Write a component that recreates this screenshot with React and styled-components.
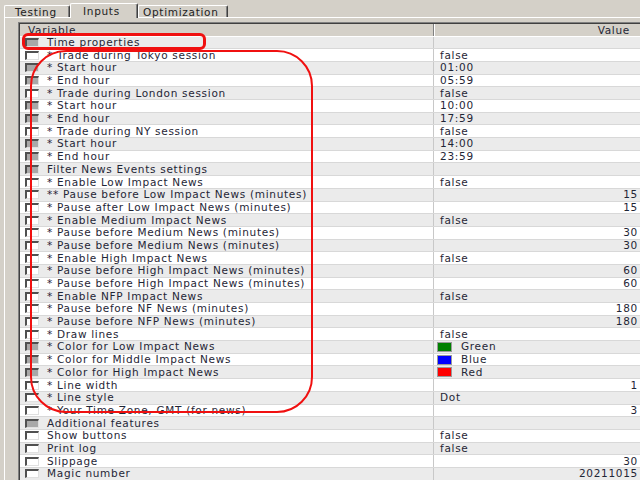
import React from "react";
import styled, { createGlobalStyle } from "styled-components";

const GlobalStyle = createGlobalStyle`
  html, body { margin: 0; padding: 0; background: #d4d0c8; }
  body { font-family: "DejaVu Sans", "Liberation Sans", sans-serif; }
  * { box-sizing: border-box; }
`;

const Window = styled.div`
  position: relative;
  width: 640px;
  height: 480px;
  overflow: hidden;
  background: #d4d0c8;
  font-size: 10.5px;
  letter-spacing: 0.7px;
  color: #1f2636;
`;

const TabBar = styled.div`
  display: flex;
  align-items: flex-end;
  height: 17px;
  padding-left: 4px;
`;

const Tab = styled.div`
  position: relative;
  width: ${(p) => p.$w}px;
  height: ${(p) => (p.$active ? "15px" : "12px")};
  padding-left: ${(p) => p.$pad}px;
  margin-bottom: ${(p) => (p.$active ? "-1px" : "0")};
  background: #d4d0c8;
  border-top: 1px solid #fff;
  border-left: 1px solid #fff;
  border-right: 1px solid #404040;
  border-top-left-radius: 2px;
  border-top-right-radius: 2px;
  display: flex;
  align-items: center;
  font-size: 10.5px;
  color: #222;
  z-index: ${(p) => (p.$active ? 2 : 1)};
  box-shadow: inset -1px 0 0 #808080;
`;

const Panel = styled.div`
  border-top: 1px solid #fff;
  border-left: 1px solid #fff;
  margin-left: 4px;
  height: 463px;
  padding: 4px 0 0 13px;
`;

const Table = styled.div`
  width: 622px;
  border-top: 1px solid #808080;
  border-left: 1px solid #808080;
  box-shadow: inset 1px 1px 0 #404040;
  padding: 1px 0 0 1px;
  background: #fff;
`;

const HeaderRow = styled.div`
  display: grid;
  grid-template-columns: 414px 1fr;
  height: 12.6px;
  background: #d4d0c8;
  border-bottom: 1px solid #ffffff;
`;

const HeaderCell = styled.div`
  padding: 0 ${(p) => (p.$right ? "10px" : "8px")};
  text-align: ${(p) => (p.$right ? "right" : "left")};
  line-height: 12px;
  color: #1f2636;
  border-right: ${(p) => (p.$right ? "none" : "1px solid #808080")};
  box-shadow: ${(p) => (p.$right ? "inset 1px 0 0 #fff" : "none")};
`;

const Row = styled.div`
  display: grid;
  grid-template-columns: 414px 1fr;
  height: 12.7px;
  background: ${(p) => (p.$alt ? "#ebebeb" : "#ffffff")};
  border-bottom: 1px solid #d8d8d8;
`;

const NameCell = styled.div`
  display: flex;
  align-items: center;
  padding-left: 5px;
  border-right: 1px solid #c8c8c8;
  white-space: nowrap;
  overflow: hidden;
  line-height: 11px;
`;

const Check = styled.span`
  flex: none;
  width: 14px;
  height: 9px;
  margin-right: 8px;
  border-top: 2px solid #505050;
  border-left: 2px solid #505050;
  border-right: 1px solid #e0e0e0;
  border-bottom: 1px solid #e0e0e0;
  background: ${(p) => (p.$filled ? "#a8a8a8" : "#ffffff")};
`;

const ValueCell = styled.div`
  display: flex;
  align-items: center;
  justify-content: ${(p) => (p.$right ? "flex-end" : "flex-start")};
  padding: 0 ${(p) => (p.$right ? "2px" : "0")} 0 ${(p) => (p.$right ? "0" : "6px")};
  white-space: nowrap;
  line-height: 11px;
`;

const Swatch = styled.span`
  width: 15px;
  height: 10px;
  margin: 0 9px 0 -3px;
  background: ${(p) => p.$color};
  border: 1px solid #9a9a9a;
`;

const Ring = styled.div`
  position: absolute;
  left: ${(p) => p.$l}px;
  top: ${(p) => p.$t}px;
  width: ${(p) => p.$w}px;
  height: ${(p) => p.$h}px;
  border: ${(p) => p.$b}px solid #f01010;
  border-radius: ${(p) => p.$r}px;
  pointer-events: none;
`;

const rows = [
  ["Time properties", "", true],
  ["* Trade during Tokyo session", "false", false],
  ["* Start hour", "01:00", true],
  ["* End hour", "05:59", true],
  ["* Trade during London session", "false", false],
  ["* Start hour", "10:00", true],
  ["* End hour", "17:59", true],
  ["* Trade during NY session", "false", false],
  ["* Start hour", "14:00", true],
  ["* End hour", "23:59", true],
  ["Filter News Events settings", "", true],
  ["* Enable Low Impact News", "false", false],
  ["** Pause before Low Impact News (minutes)", "15", false, true],
  ["* Pause after Low Impact News (minutes)", "15", false, true],
  ["* Enable Medium Impact News", "false", false],
  ["* Pause before Medium News (minutes)", "30", false, true],
  ["* Pause before Medium News (minutes)", "30", false, true],
  ["* Enable High Impact News", "false", false],
  ["* Pause before High Impact News (minutes)", "60", false, true],
  ["* Pause before High Impact News (minutes)", "60", false, true],
  ["* Enable NFP Impact News", "false", false],
  ["* Pause before NF News (minutes)", "180", false, true],
  ["* Pause before NFP News (minutes)", "180", false, true],
  ["* Draw lines", "false", false],
  ["* Color for Low Impact News", { c: "#008000", t: "Green" }, true],
  ["* Color for Middle Impact News", { c: "#0000ff", t: "Blue" }, true],
  ["* Color for High Impact News", { c: "#ff0000", t: "Red" }, true],
  ["* Line width", "1", false, true],
  ["* Line style", "Dot", false],
  ["* Your Time Zone, GMT (for news)", "3", false, true],
  ["Additional features", "", true],
  ["Show buttons", "false", false],
  ["Print log", "false", false],
  ["Slippage", "30", false, true],
  ["Magic number", "20211015", false, true],
];

export default function App() {
  return (
    <Window>
      <GlobalStyle />
      <TabBar>
        <Tab $w={66} $pad={10}>Testing</Tab>
        <Tab $active $w={68} $pad={12}>Inputs</Tab>
        <Tab $w={90} $pad={4}>Optimization</Tab>
      </TabBar>
      <Panel>
        <Table>
          <HeaderRow>
            <HeaderCell>Variable</HeaderCell>
            <HeaderCell $right>Value</HeaderCell>
          </HeaderRow>
          {rows.map(([name, value, filled, right], i) => (
            <Row key={i} $alt={i % 2 === 0}>
              <NameCell>
                <Check $filled={filled} />
                {name}
              </NameCell>
              <ValueCell $right={right}>
                {typeof value === "object" ? (
                  <>
                    <Swatch $color={value.c} />
                    {value.t}
                  </>
                ) : (
                  value
                )}
              </ValueCell>
            </Row>
          ))}
        </Table>
      </Panel>
      <Ring $l={22} $t={33} $w={184} $h={17} $b={3} $r={6} />
      <Ring $l={30} $t={50} $w={283} $h={363} $b={2} $r={36} />
    </Window>
  );
}
